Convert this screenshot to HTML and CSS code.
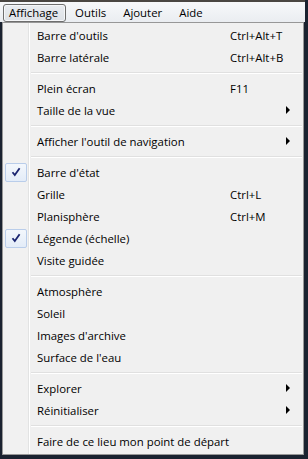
FILE: index.html
```html
<!DOCTYPE html>
<html lang="fr">
<head>
<meta charset="utf-8">
<link rel="stylesheet" href="styles.css">
</head>
<body>
<div class="app">
  <div class="menubar">
    <span class="top active">Affichage</span>
    <span class="top">Outils</span>
    <span class="top">Ajouter</span>
    <span class="top">Aide</span>
  </div>
  <div class="menu">
    <div class="item"><span class="gut"></span><span class="label">Barre d'outils</span><span class="key">Ctrl+Alt+T</span><span class="sub"></span></div>
    <div class="item"><span class="gut"></span><span class="label">Barre latérale</span><span class="key">Ctrl+Alt+B</span><span class="sub"></span></div>
    <div class="sep"></div>
    <div class="item"><span class="gut"></span><span class="label">Plein écran</span><span class="key">F11</span><span class="sub"></span></div>
    <div class="item"><span class="gut"></span><span class="label">Taille de la vue</span><span class="key"></span><span class="sub"><i class="arrow"></i></span></div>
    <div class="sep"></div>
    <div class="item"><span class="gut"></span><span class="label">Afficher l'outil de navigation</span><span class="key"></span><span class="sub"><i class="arrow"></i></span></div>
    <div class="sep"></div>
    <div class="item"><span class="gut"><span class="check"><svg width="10" height="10" viewBox="0 0 10 10"><path d="M1.5 5.2 L3.8 8 L8.6 1.2" fill="none" stroke="#1a2470" stroke-width="1.8"/></svg></span></span><span class="label">Barre d'état</span><span class="key"></span><span class="sub"></span></div>
    <div class="item"><span class="gut"></span><span class="label">Grille</span><span class="key">Ctrl+L</span><span class="sub"></span></div>
    <div class="item"><span class="gut"></span><span class="label">Planisphère</span><span class="key">Ctrl+M</span><span class="sub"></span></div>
    <div class="item"><span class="gut"><span class="check"><svg width="10" height="10" viewBox="0 0 10 10"><path d="M1.5 5.2 L3.8 8 L8.6 1.2" fill="none" stroke="#1a2470" stroke-width="1.8"/></svg></span></span><span class="label">Légende (échelle)</span><span class="key"></span><span class="sub"></span></div>
    <div class="item"><span class="gut"></span><span class="label">Visite guidée</span><span class="key"></span><span class="sub"></span></div>
    <div class="sep"></div>
    <div class="item"><span class="gut"></span><span class="label">Atmosphère</span><span class="key"></span><span class="sub"></span></div>
    <div class="item"><span class="gut"></span><span class="label">Soleil</span><span class="key"></span><span class="sub"></span></div>
    <div class="item"><span class="gut"></span><span class="label">Images d'archive</span><span class="key"></span><span class="sub"></span></div>
    <div class="item"><span class="gut"></span><span class="label">Surface de l'eau</span><span class="key"></span><span class="sub"></span></div>
    <div class="sep"></div>
    <div class="item"><span class="gut"></span><span class="label">Explorer</span><span class="key"></span><span class="sub"><i class="arrow"></i></span></div>
    <div class="item"><span class="gut"></span><span class="label">Réinitialiser</span><span class="key"></span><span class="sub"><i class="arrow"></i></span></div>
    <div class="sep"></div>
    <div class="item"><span class="gut"></span><span class="label">Faire de ce lieu mon point de départ</span><span class="key"></span><span class="sub"></span></div>
  </div>
</div>
</body>
</html>
```

FILE: styles.css
```css
html, body {
  margin: 0;
  padding: 0;
  background: #1a2230;
}
body {
  font-family: "Open Sans", "Noto Sans", sans-serif;
  font-size: 11.4px;
  color: #000;
  width: 308px;
  height: 459px;
  overflow: hidden;
}
.app {
  width: 305px;
}
.menubar {
  height: 20px;
  border-top: 2px solid #4a4642;
  background: linear-gradient(#f7f8fa, #eaedf1);
  display: flex;
  align-items: center;
  padding-left: 3px;
  gap: 3px;
}
.top {
  height: 18px;
  line-height: 16px;
  padding: 0 7px 0 5px;
  box-sizing: border-box;
  border: 1px solid transparent;
  margin-top: 1px;
}
.top.active {
  border: 1px solid #6e6e6e;
  border-radius: 3px;
  background: linear-gradient(#e9ecf0, #dde1e6);
  box-shadow: inset 0 0 0 1px #f6f7f9;
}
.menu {
  margin-left: 2px;
  width: 302px;
  box-sizing: border-box;
  border: 1px solid #979797;
  padding: 1px;
  background: linear-gradient(to right, #f1f1f1 0 25px, #e2e3e3 25px 26px, #fff 26px 27px, #f0f0f0 27px);
  height: 433px;
}
.item {
  display: flex;
  align-items: center;
  height: 22px;
}
.gut {
  width: 27px;
  height: 22px;
  display: flex;
  align-items: center;
  padding-left: 1px;
  box-sizing: border-box;
}
.check {
  width: 22px;
  height: 19px;
  box-sizing: border-box;
  border: 1px solid #b9cdea;
  border-radius: 2px;
  background: linear-gradient(#f3f7fc, #e3ecf8);
  display: flex;
  align-items: center;
  justify-content: center;
}
.label {
  flex: 1;
  padding-left: 6px;
  white-space: nowrap;
}
.key {
  width: 56px;
  white-space: nowrap;
}
.sub {
  width: 16px;
  display: flex;
  align-items: center;
}
.arrow {
  display: block;
  width: 0;
  height: 0;
  border-top: 4px solid transparent;
  border-bottom: 4px solid transparent;
  border-left: 4px solid #000;
}
.sep {
  height: 9px;
  margin-left: 27px;
  background: linear-gradient(#f0f0f0 0 4px, #e0e0e0 4px 5px, #fff 5px 6px, #f0f0f0 6px);
}
```
